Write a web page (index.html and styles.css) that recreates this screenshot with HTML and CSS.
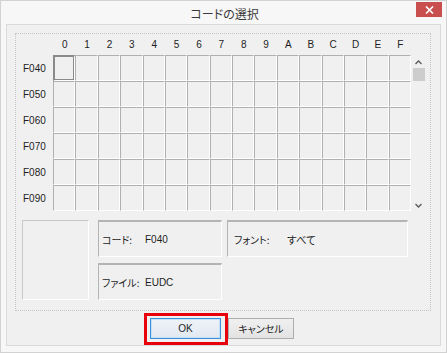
FILE: index.html
```html
<!DOCTYPE html>
<html lang="ja">
<head>
<meta charset="utf-8">
<title>コードの選択</title>
<link rel="stylesheet" href="styles.css">
</head>
<body>
<div class="window">
  <div class="titlebar">
    <span class="title jp">コードの選択</span>
    <div class="close" aria-label="閉じる">
      <svg width="9" height="8" viewBox="0 0 9 8"><path d="M1 0.5 L8 7.5 M8 0.5 L1 7.5" stroke="#fff" stroke-width="1.6" fill="none"/></svg>
    </div>
  </div>
  <div class="client">
    <div class="frame">
      <div class="headers">
        <span>0</span><span>1</span><span>2</span><span>3</span><span>4</span><span>5</span><span>6</span><span>7</span><span>8</span><span>9</span><span>A</span><span>B</span><span>C</span><span>D</span><span>E</span><span>F</span>
      </div>
      <div class="main">
        <div class="rowlabels">
          <div>F040</div><div>F050</div><div>F060</div><div>F070</div><div>F080</div><div>F090</div>
        </div>
        <div class="grid" id="grid">
          <div class="cell selected"></div>
        </div>
        <div class="scrollbar">
          <svg class="arrow" width="7" height="5" viewBox="0 0 7 5"><path d="M0.5 4 L3.5 1 L6.5 4" stroke="#5a5a5a" stroke-width="1.3" fill="none"/></svg>
          <div class="thumb"></div>
          <div class="spacer"></div>
          <svg class="arrow" width="7" height="5" viewBox="0 0 7 5"><path d="M0.5 1 L3.5 4 L6.5 1" stroke="#5a5a5a" stroke-width="1.3" fill="none"/></svg>
        </div>
      </div>
      <div class="info">
        <div class="preview"></div>
        <div class="fields">
          <div class="box code"><span class="lbl jp">コード:</span><span class="val">F040</span></div>
          <div class="box font"><span class="lbl jp">フォント:</span><span class="val jp">すべて</span></div>
          <div class="box file"><span class="lbl jp">ファイル:</span><span class="val">EUDC</span></div>
        </div>
      </div>
    </div>
    <div class="buttons">
      <div class="highlight"><button class="btn ok">OK</button></div>
      <button class="btn cancel jp">キャンセル</button>
    </div>
  </div>
</div>
<script>
  var g = document.getElementById('grid');
  for (var i = 1; i < 96; i++) { var c = document.createElement('div'); c.className = 'cell'; g.appendChild(c); }
</script>
</body>
</html>
```

FILE: styles.css
```css
html, body {
  margin: 0;
  padding: 0;
}
body {
  width: 447px;
  height: 353px;
  background: #f7f7f7;
  font-family: "Liberation Sans", "Noto Sans CJK JP", sans-serif;
  font-size: 10px;
  color: #1e1e1e;
}
.jp {
  font-family: "Noto Sans CJK JP", sans-serif;
  font-feature-settings: "palt";
}
.window {
  box-sizing: border-box;
  width: 447px;
  height: 353px;
  border: 1px solid #d2d2d2;
  background: #f7f7f7;
  padding: 0 5px 6px 5px;
  display: flex;
  flex-direction: column;
}
.titlebar {
  position: relative;
  height: 23px;
  display: flex;
  align-items: center;
  justify-content: center;
}
.title {
  font-size: 12px;
  color: #3a3a3a;
  margin-left: 2px;
  margin-top: 1px;
}
.close {
  position: absolute;
  right: -1px;
  top: 1px;
  width: 26px;
  height: 15px;
  background: #c94f4f;
  display: flex;
  align-items: center;
  justify-content: center;
}
.client {
  flex: 1;
  border: 1px solid #dadada;
  background: #f0f0f0;
  padding: 8px 9px 0 8px;
  display: flex;
  flex-direction: column;
}
.frame {
  border: 1px dotted #c4c4c4;
  padding: 0 0 10px 0;
}
.headers {
  height: 21px;
  margin-left: 37px;
  width: 358px;
  display: grid;
  grid-template-columns: repeat(16, 1fr);
  align-items: center;
  text-align: center;
}
.headers span {
  padding-left: 1px;
}
.main {
  display: flex;
  height: 156px;
}
.rowlabels {
  width: 37px;
  box-sizing: border-box;
  padding-left: 7px;
  display: grid;
  grid-template-rows: repeat(6, 26px);
  align-items: center;
}
.rowlabels div {
  padding-top: 1px;
}
.grid {
  width: 358px;
  height: 156px;
  display: grid;
  grid-template-columns: repeat(16, 1fr);
  grid-template-rows: repeat(6, 26px);
}
.cell {
  box-sizing: border-box;
  border-top: 1px solid #b0b0b0;
  border-left: 1px solid #b0b0b0;
  border-right: 1px solid #ffffff;
  border-bottom: 1px solid #ffffff;
  background: #f0f0f0;
}
.cell.selected {
  border-top: 2px solid #8a8a8a;
  border-left: 2px solid #8a8a8a;
  border-right: 1px solid #ffffff;
  border-bottom: 1px solid #ffffff;
  box-shadow: inset -1px -1px 0 #8a8a8a;
}
.scrollbar {
  width: 15px;
  display: flex;
  flex-direction: column;
  align-items: center;
  padding-top: 5px;
  box-sizing: border-box;
}
.arrow {
  display: block;
  flex: none;
}
.thumb {
  width: 12px;
  height: 13px;
  background: #cdcdcd;
  margin-top: 3px;
  margin-left: 1px;
}
.spacer {
  flex: 1;
}
.scrollbar .arrow:last-child {
  margin-bottom: 3px;
}
.info {
  display: flex;
  margin-top: 9px;
  padding-left: 6px;
  height: 80px;
}
.preview {
  width: 67px;
  height: 80px;
  box-sizing: border-box;
  border-top: 1px solid #c9c9c9;
  border-left: 1px solid #c9c9c9;
  border-right: 1px solid #ffffff;
  border-bottom: 1px solid #ffffff;
}
.fields {
  margin-left: 9px;
  display: grid;
  grid-template-columns: 124px 181px;
  grid-template-rows: 37px 37px;
  column-gap: 5px;
  row-gap: 6px;
}
.box {
  box-sizing: border-box;
  border-top: 2px solid #b4b4b4;
  border-left: 1px solid #b4b4b4;
  border-right: 1px solid #ffffff;
  border-bottom: 1px solid #ffffff;
  display: flex;
  align-items: center;
  padding-top: 1px;
}
.code { grid-column: 1; grid-row: 1; padding-left: 3px; }
.font { grid-column: 2; grid-row: 1; padding-left: 6px; }
.file { grid-column: 1; grid-row: 2; padding-left: 3px; }
.lbl {
  font-size: 10px;
}
.code .lbl, .file .lbl { width: 43px; }
.font .lbl { width: 53px; }
.val.jp { font-size: 10.5px; }
.buttons {
  display: flex;
  align-items: flex-start;
  padding-left: 129px;
  margin-top: 2px;
}
.highlight {
  border: 3px solid #e8000b;
  padding: 2px 4px 3px 3px;
}
.btn {
  box-sizing: border-box;
  height: 21px;
  margin: 0;
  padding: 0;
  font-family: "Liberation Sans", sans-serif;
  font-size: 10px;
  color: #1e1e1e;
  background: linear-gradient(#f0f0f0, #e3e3e3);
  border: 1px solid #adadad;
  border-radius: 0;
}
.ok {
  width: 71px;
  border: 1px solid #3c8fd8;
  background: linear-gradient(#eef3f8, #e1e8f0);
  box-shadow: inset 0 0 0 1px #c6e1f7;
}
.cancel {
  width: 66px;
  margin-top: 5px;
  font-family: "Noto Sans CJK JP", sans-serif;
  font-feature-settings: "palt";
}
```
